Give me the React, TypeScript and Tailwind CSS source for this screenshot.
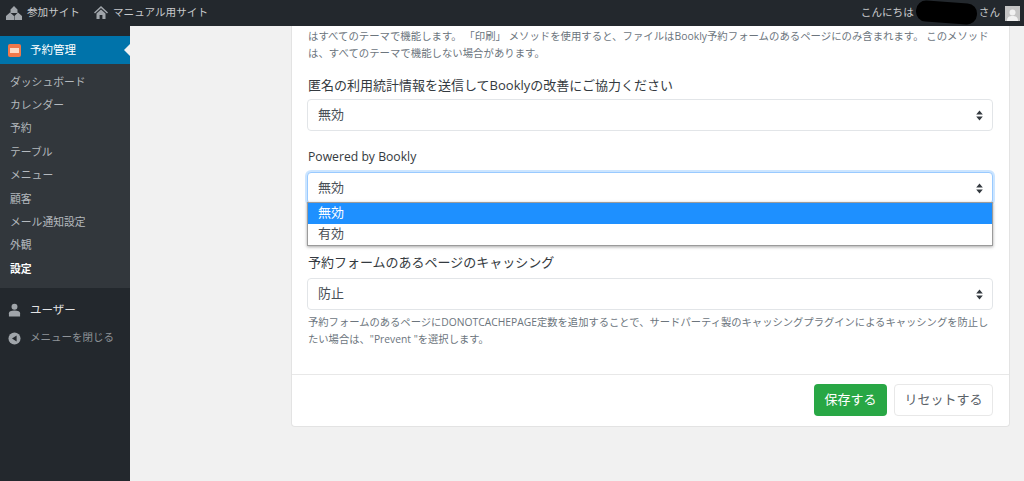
import React from "react";

const font = { fontFamily: '"Open Sans", "Noto Sans CJK JP", "Noto Sans", sans-serif' };

function Chevrons() {
  return (
    <svg width="7" height="11" viewBox="0 0 7 11" className="shrink-0">
      <path d="M3.5 0.5 L6.8 4.4 H0.2 Z M3.5 10.5 L6.8 6.6 H0.2 Z" fill="#343a40" />
    </svg>
  );
}

function Select({ value, focus }: { value: string; focus?: boolean }) {
  return (
    <div
      className={
        "flex h-[32px] items-center justify-between rounded-[4px] border bg-white pl-[10px] pr-[9px] text-[13px] text-[#495057] " +
        (focus ? "border-[#99caff] shadow-[0_0_0_2px_rgba(0,123,255,0.2)]" : "border-[#e2e5e8]")
      }
    >
      <span>{value}</span>
      <Chevrons />
    </div>
  );
}

const items = ["ダッシュボード", "カレンダー", "予約", "テーブル", "メニュー", "顧客", "メール通知設定", "外観"];

export default function App() {
  return (
    <div className="flex h-[481px] w-[1024px] flex-col overflow-hidden bg-[#f1f1f1]" style={font}>
      <header className="z-20 flex h-[26px] shrink-0 items-center justify-between bg-[#23282d] pl-[6px] pr-[4px] text-[10.6px] text-[#c8cacc]">
        <div className="flex items-center">
          <svg width="16" height="14" viewBox="0 0 16 14" className="mr-[5px]">
            <path d="M8 0 L11.5 3.6 V7 H4.5 V3.6 Z M4 6.5 L8 10 V14 H0 V10 Z M12 6.5 L16 10 V14 H8.5 V10 Z" fill="#a0a5aa" />
          </svg>
          <span>参加サイト</span>
          <svg width="14" height="13" viewBox="0 0 14 13" className="ml-[14px] mr-[5px]">
            <path d="M7 0 L14 6.4 L13 7.4 L7 2 L1 7.4 L0 6.4 Z M2.5 7.6 L7 3.6 L11.5 7.6 V13 H8.4 V9 H5.6 V13 H2.5 Z" fill="#a0a5aa" />
          </svg>
          <span>マニュアル用サイト</span>
        </div>
        <div className="flex items-center">
          <span>こんにちは</span>
          <div className="relative ml-[2px] h-[18px] w-[61px]">
            <div className="absolute -top-[2px] left-0 h-[21px] w-[61px] rotate-[4deg] rounded-[10px] bg-black" />
          </div>
          <span className="ml-[2px]">さん</span>
          <div className="ml-[5px] flex h-[15px] w-[15px] items-end justify-center overflow-hidden bg-[#c4c4c4]">
            <svg width="13" height="13" viewBox="0 0 13 13">
              <circle cx="6.5" cy="4.5" r="3" fill="#f1f1f1" />
              <path d="M1 13 C1 9 3 8 6.5 8 C10 8 12 9 12 13 Z" fill="#f1f1f1" />
            </svg>
          </div>
        </div>
      </header>

      <div className="flex min-h-0 flex-1">
        <aside className="flex w-[130px] shrink-0 flex-col bg-[#23282d] pt-[10px]">
          <div className="relative flex h-[28px] items-center bg-[#0073aa] pl-[8px] text-[11.5px] text-white">
            <div className="mr-[9px] flex h-[13px] w-[13px] items-center justify-center rounded-[2px] bg-[#f0784a]">
              <div className="h-[5px] w-[9px] bg-[#fbd9c4]" />
            </div>
            <span>予約管理</span>
            <div className="absolute right-0 top-[8px] h-0 w-0 border-y-[6px] border-r-[6px] border-y-transparent border-r-[#f1f1f1]" />
          </div>
          <nav className="flex flex-col bg-[#32373c] pb-[7px] pt-[6px] text-[10.8px] text-[#b4b9be]">
            {items.map((t) => (
              <div key={t} className="flex h-[23.4px] items-center pl-[10px]">
                {t}
              </div>
            ))}
            <div className="flex h-[23.4px] items-center pl-[10px] font-bold text-white">設定</div>
          </nav>
          <div className="mt-[11px] flex h-[23px] items-center pl-[8px] text-[11.5px] text-[#e2e3e4]">
            <svg width="13" height="14" viewBox="0 0 14 14" className="mr-[9px]">
              <circle cx="7" cy="3.6" r="3.2" fill="#a0a5aa" />
              <path d="M1 14 V10.5 C1 8.5 3 7.6 7 7.6 C11 7.6 13 8.5 13 10.5 V14 Z" fill="#a0a5aa" />
            </svg>
            <span>ユーザー</span>
          </div>
          <div className="mt-[5px] flex h-[23px] items-center pl-[8px] text-[10.5px] text-[#8f9499]">
            <svg width="13" height="13" viewBox="0 0 14 14" className="mr-[9px]">
              <circle cx="7" cy="7" r="6.5" fill="#a0a5aa" />
              <path d="M9.3 3.8 V10.2 L4.3 7 Z" fill="#23282d" />
            </svg>
            <span>メニューを閉じる</span>
          </div>
        </aside>

        <main className="min-w-0 flex-1 pl-[161px] pr-[14px]">
          <section className="h-[401px] overflow-hidden rounded-b-[4px] border-x border-b border-[#e3e3e3] bg-white">
            <div className="pl-[15px] pr-[16px]">
              <p className="pl-[1px] pt-[2px] text-[10.4px] leading-[17px] text-[#6c757d] [text-spacing-trim:space-all]">
                はすべてのテーマで機能します。 「印刷」 メソッドを使用すると、ファイルはBookly予約フォームのあるページにのみ含まれます。 このメソッド
                <br />
                は、すべてのテーマで機能しない場合があります。
              </p>
              <div className="mt-[13px] pl-[1px] text-[13px] leading-[20px] text-[#343a40]">
                匿名の利用統計情報を送信してBooklyの改善にご協力ください
              </div>
              <div className="mt-[4px]">
                <Select value="無効" />
              </div>
              <div className="mt-[16px] pl-[1px] text-[12.2px] leading-[20px] text-[#343a40]">Powered by Bookly</div>
              <div className="relative mt-[5px]">
                <Select value="無効" focus />
                <div className="absolute inset-x-0 top-[30px] z-10 border border-[#9b9b9b] bg-white text-[13px] text-[#495057] shadow-[0_1px_3px_rgba(0,0,0,0.35)]">
                  <div className="flex h-[21px] items-center bg-[#1e90ff] pb-[2px] pl-[10px] text-white">無効</div>
                  <div className="flex h-[21px] items-center pb-[2px] pl-[10px]">有効</div>
                </div>
              </div>
              <div className="mt-[48px] pl-[1px] text-[13px] leading-[20px] text-[#343a40]">予約フォームのあるページのキャッシング</div>
              <div className="mt-[6px]">
                <Select value="防止" />
              </div>
              <p className="mt-[4px] whitespace-nowrap pl-[1px] text-[10.3px] leading-[17px] text-[#6c757d]">
                予約フォームのあるページにDONOTCACHEPAGE定数を追加することで、サードパーティ製のキャッシングプラグインによるキャッシングを防止し
                <br />
                たい場合は、"Prevent "を選択します。
              </p>
            </div>
            <div className="mt-[26px] flex justify-end gap-[7px] border-t border-[#e8e8e8] bg-white pl-[16px] pr-[16px] pt-[9px]">
              <button className="h-[32px] w-[73px] rounded-[4px] bg-[#28a745] text-[13px] text-white">保存する</button>
              <button className="h-[32px] w-[99px] rounded-[4px] border border-[#e8e8e8] bg-white text-[13px] text-[#5a6268]">リセットする</button>
            </div>
          </section>
        </main>
      </div>
    </div>
  );
}
